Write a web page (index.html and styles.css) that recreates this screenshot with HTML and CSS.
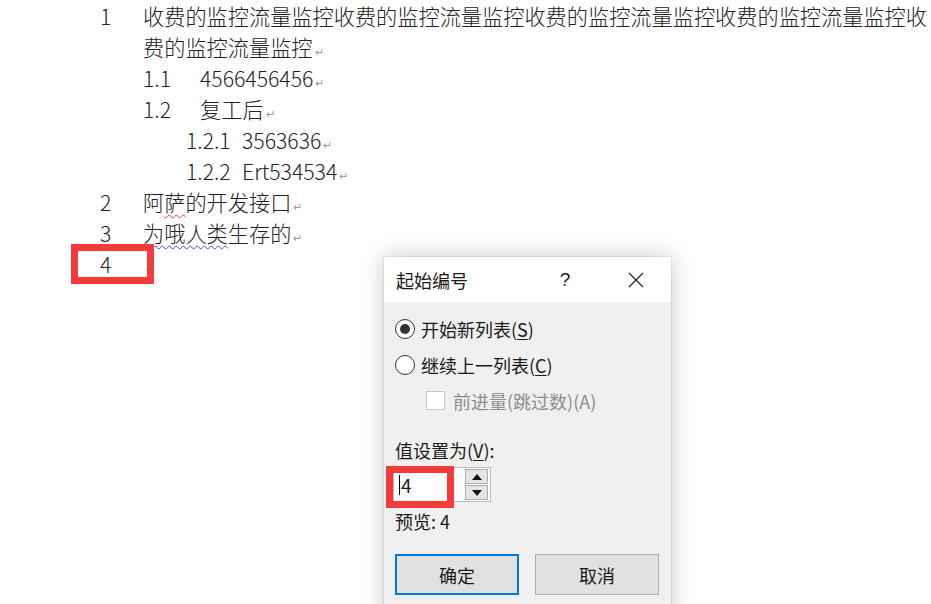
FILE: index.html
```html
<!DOCTYPE html>
<html lang="zh-CN">
<head>
<meta charset="utf-8">
<title>起始编号</title>
<link rel="stylesheet" href="styles.css">
</head>
<body>
<div class="doc">
  <div class="row l1"><span class="num">1</span><span class="txt wide">收费的监控流量监控收费的监控流量监控收费的监控流量监控收费的监控流量监控收费的监控流量监控<span class="pm">↵</span></span></div>
  <div class="row l2"><span class="num">1.1</span><span class="txt">4566456456<span class="pm">↵</span></span></div>
  <div class="row l2"><span class="num">1.2</span><span class="txt">复工后<span class="pm">↵</span></span></div>
  <div class="row l3"><span class="num">1.2.1</span><span class="txt">3563636<span class="pm">↵</span></span></div>
  <div class="row l3"><span class="num">1.2.2</span><span class="txt">Ert534534<span class="pm">↵</span></span></div>
  <div class="row l1"><span class="num">2</span><span class="txt">阿<span class="sq-red">萨</span>的开发接口<span class="pm">↵</span></span></div>
  <div class="row l1"><span class="num">3</span><span class="txt"><span class="sq-blue">为哦人类</span>生存的<span class="pm">↵</span></span></div>
  <div class="row l1 last"><span class="num">4</span><span class="txt"><span class="pm faint">↵</span></span><span class="mark mark-doc"></span></div>
</div>

<div class="dialog">
  <div class="titlebar">
    <span class="title">起始编号</span>
    <span class="help">?</span>
    <span class="close"><svg width="16" height="16" viewBox="0 0 16 16"><path d="M1 1L15 15M15 1L1 15" stroke="#222" stroke-width="1.2" fill="none"/></svg></span>
  </div>
  <div class="dbody">
    <div class="opt"><span class="radio on"></span><span>开始新列表(<u>S</u>)</span></div>
    <div class="opt"><span class="radio"></span><span>继续上一列表(<u>C</u>)</span></div>
    <div class="opt sub"><span class="check"></span><span>前进量(跳过数)(A)</span></div>
    <div class="lbl">值设置为(<u>V</u>):</div>
    <div class="spin">
      <div class="field"><span class="caret"></span>4</div>
      <div class="arrows">
        <span class="ab"><svg width="10" height="6" viewBox="0 0 10 6"><path d="M5 0L10 6H0Z" fill="#111"/></svg></span>
        <span class="ab"><svg width="10" height="6" viewBox="0 0 10 6"><path d="M0 0H10L5 6Z" fill="#111"/></svg></span>
      </div>
      <span class="mark mark-input"></span>
    </div>
    <div class="preview">预览: 4</div>
    <div class="btns">
      <button class="btn def">确定</button>
      <button class="btn">取消</button>
    </div>
  </div>
</div>
</body>
</html>
```

FILE: styles.css
```css
html, body {
  margin: 0;
  padding: 0;
  background: #fff;
}
body {
  width: 931px;
  height: 604px;
  overflow: hidden;
  position: relative;
  font-family: "Noto Sans CJK SC", "Noto Sans", sans-serif;
  color: #1e1e1e;
}

.doc {
  font-size: 21.2px;
  line-height: 31px;
  font-weight: 300;
  color: #222;
}
.row {
  display: flex;
  position: relative;
  white-space: nowrap;
}
.num { flex: none; height: 31px; }
.l1 .num { margin-left: 100px; width: 43px; }
.l2 .num { margin-left: 143px; width: 57px; }
.l3 .num { margin-left: 186px; width: 56px; }
.txt { white-space: normal; }
.wide { width: 790px; }
.pm {
  font-size: 11px;
  line-height: 0;
  color: #9a9a9a;
  margin-left: 2px;
  font-family: "DejaVu Sans", sans-serif;
}
.faint { color: #d8d8d8; }

.sq-red {
  text-decoration: underline wavy #e53935;
  text-decoration-thickness: 1px;
  text-underline-offset: 3px;
  text-decoration-skip-ink: none;
}
.sq-blue {
  text-decoration: underline wavy #3d4be0;
  text-decoration-thickness: 1px;
  text-underline-offset: 3px;
  text-decoration-skip-ink: none;
}

.mark {
  position: absolute;
  border: 7px solid #f53a3a;
  box-sizing: border-box;
}
.mark-doc {
  left: 71px;
  top: -4px;
  width: 83px;
  height: 40px;
}

/* dialog */
.dialog {
  position: absolute;
  left: 384px;
  top: 257px;
  width: 287px;
  height: 380px;
  background: #f0f0f0;
  box-shadow: 0 0 0 1px rgba(0,0,0,0.06), 0 0 22px rgba(0,0,0,0.22);
  font-size: 18px;
  color: #1a1a1a;
}
.titlebar {
  height: 45px;
  background: #fff;
  display: flex;
  align-items: center;
  padding-left: 12px;
}
.title { flex: 1; line-height: 24px; }
.help {
  width: 20px;
  text-align: center;
  margin-right: 53px;
  font-family: "Liberation Sans", sans-serif;
  font-size: 19px;
  color: #222;
}
.close {
  width: 16px;
  height: 16px;
  margin-right: 27px;
  display: flex;
}

.dbody {
  padding: 9px 11px 0;
  display: flex;
  flex-direction: column;
}
.opt {
  height: 36px;
  display: flex;
  align-items: center;
  gap: 6px;
  line-height: 24px;
}
.opt.sub {
  height: 35px;
  padding-left: 31px;
  gap: 8px;
  color: #8c8c8c;
}
u { text-underline-offset: 2px; }
.radio {
  width: 18px;
  height: 18px;
  border: 1px solid #333;
  border-radius: 50%;
  background: #fff;
  position: relative;
  flex: none;
}
.radio.on::after {
  content: "";
  position: absolute;
  left: 4px;
  top: 4px;
  width: 10px;
  height: 10px;
  border-radius: 50%;
  background: #333;
}
.check {
  width: 17px;
  height: 17px;
  border: 1px solid #c6c6c6;
  background: #fff;
  flex: none;
}
.lbl {
  margin-top: 20px;
  line-height: 24px;
}
.spin {
  margin-top: 5px;
  margin-left: -2px;
  width: 98px;
  height: 35px;
  box-sizing: border-box;
  border: 1px solid #b9b9b9;
  background: #fff;
  display: flex;
  position: relative;
}
.field {
  flex: 1;
  display: flex;
  align-items: center;
  padding-left: 5px;
  font-size: 19px;
  line-height: 24px;
}
.caret {
  width: 1px;
  height: 20px;
  background: #000;
  margin-right: 1px;
}
.arrows {
  width: 23px;
  display: flex;
  flex-direction: column;
  gap: 1px;
  padding: 1px 2px 1px 0;
}
.ab {
  flex: 1;
  border: 1px solid #adadad;
  background: #e5e5e5;
  display: flex;
  align-items: center;
  justify-content: center;
}
.mark-input {
  left: -8px;
  top: -2px;
  width: 68px;
  height: 42px;
}
.preview {
  margin-top: 7px;
  line-height: 24px;
}
.btns {
  margin-top: 21px;
  display: flex;
  gap: 16px;
}
.btn {
  width: 124px;
  height: 41px;
  box-sizing: border-box;
  border: 1px solid #adadad;
  background: #e1e1e1;
  font: inherit;
  color: #1a1a1a;
  padding: 0;
}
.btn.def {
  border: 2px solid #0078d7;
}
```
